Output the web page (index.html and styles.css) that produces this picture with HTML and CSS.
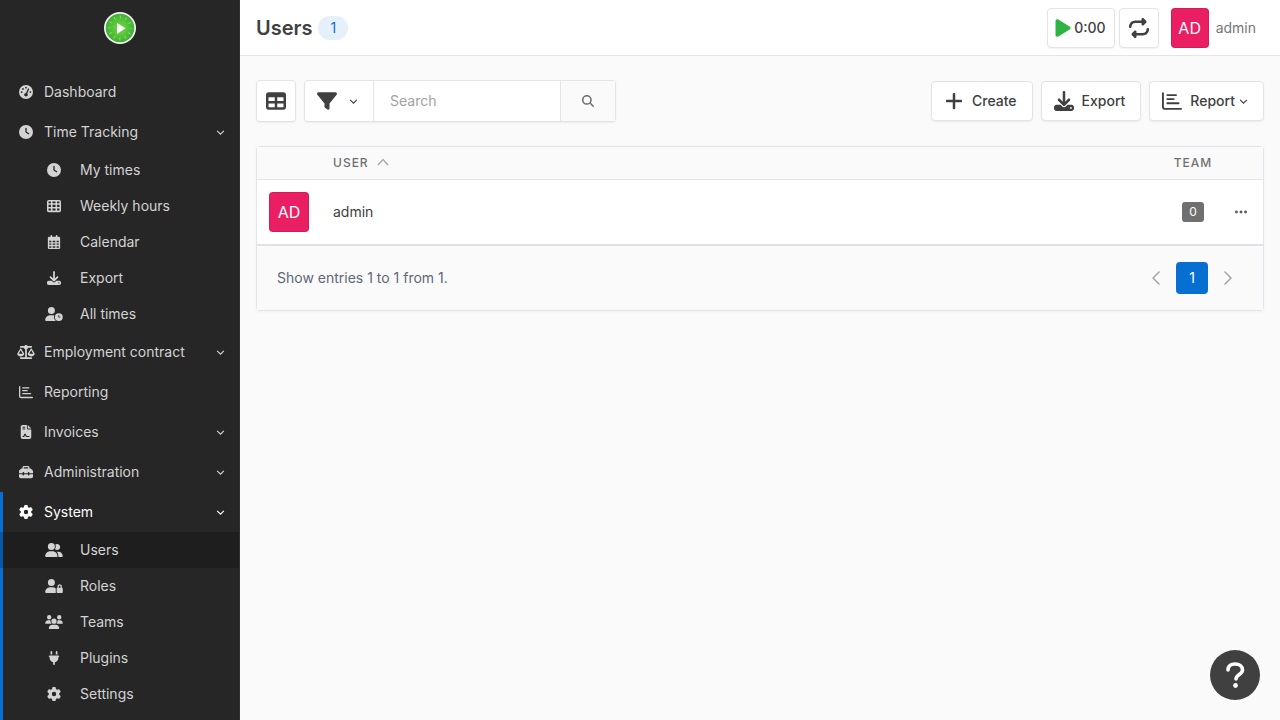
FILE: index.html
```html
<!DOCTYPE html>
<html lang="en">
<head>
  <meta charset="UTF-8" />
  <meta name="viewport" content="width=device-width, initial-scale=1.0"/>
  <title>Users</title>
  <link rel="stylesheet" href="styles.css">
</head>
<body>
  <!-- icon sprite -->
  <svg class="sprite" aria-hidden="true">
    <symbol id="i-gauge" viewBox="0 0 512 512"><path fill-rule="evenodd" d="M0 256a256 256 0 1 1 512 0A256 256 0 1 1 0 256zM288 96a32 32 0 1 0 -64 0 32 32 0 1 0 64 0zM256 416c35.3 0 64-28.7 64-64c0-17.4-6.9-33.1-18.1-44.6L366 161.7c5.3-12.1-.2-26.3-12.3-31.6s-26.3 .2-31.6 12.3L257.9 288c-.6 0-1.3 0-1.9 0c-35.3 0-64 28.7-64 64s28.7 64 64 64zM176 144a32 32 0 1 0 -64 0 32 32 0 1 0 64 0zM96 288a32 32 0 1 0 0-64 32 32 0 1 0 0 64zm352-32a32 32 0 1 0 -64 0 32 32 0 1 0 64 0z"/></symbol>
    <symbol id="i-clock" viewBox="0 0 512 512"><path d="M256 0a256 256 0 1 1 0 512A256 256 0 1 1 256 0zM232 120V256c0 8 4 15.5 10.7 20l96 64c11 7.4 25.9 4.4 33.3-6.7s4.4-25.9-6.7-33.3L280 243.2V120c0-13.3-10.7-24-24-24s-24 10.7-24 24z"/></symbol>
    <symbol id="i-cells" viewBox="0 0 512 512"><path fill-rule="evenodd" d="M64 32H448a64 64 0 0 1 64 64V416a64 64 0 0 1-64 64H64a64 64 0 0 1-64-64V96a64 64 0 0 1 64-64zM56 88v64h88V88zM200 88v64h112V88zM368 88v64h88V88zM56 208v80h88v-80zM200 208v80h112v-80zM368 208v80h88v-80zM56 344v80h88v-80zM200 344v80h112v-80zM368 344v80h88v-80z"/></symbol>
    <symbol id="i-calendar" viewBox="0 0 448 512"><path fill-rule="evenodd" d="M128 0c17.7 0 32 14.3 32 32V64H288V32c0-17.7 14.3-32 32-32s32 14.3 32 32V64h48c26.500 0 48 21.500 48 48v80H0V112C0 85.500 21.500 64 48 64H96V32c0-17.700 14.300-32 32-32zM0 192H448V464c0 26.500-21.500 48-48 48H48c-26.500 0-48-21.500-48-48zM48 208v56h80v-56zM176 208v56h96v-56zM320 208v56h80v-56zM48 312v48h80v-48zM176 312v48h96v-48zM320 312v48h80v-48zM48 408v56h80v-56zM176 408v56h96v-56zM320 408v56h80v-56z"/></symbol>
    <symbol id="i-download" viewBox="0 0 512 512"><path d="M288 32c0-17.700-14.300-32-32-32s-32 14.300-32 32V274.700l-73.400-73.400c-12.500-12.500-32.800-12.500-45.300 0s-12.500 32.800 0 45.300l128 128c12.500 12.500 32.800 12.500 45.300 0l128-128c12.500-12.500 12.500-32.800 0-45.300s-32.800-12.500-45.300 0L288 274.700V32zM64 352c-35.300 0-64 28.700-64 64v32c0 35.300 28.700 64 64 64H448c35.300 0 64-28.700 64-64V416c0-35.300-28.700-64-64-64H346.500l-45.300 45.300c-25 25-65.500 25-90.500 0L165.500 352H64zm368 56a24 24 0 1 1 0 48 24 24 0 1 1 0-48z"/></symbol>
    <symbol id="i-user-clock" viewBox="0 0 640 512"><path fill-rule="evenodd" d="M224 0a128 128 0 1 1 0 256A128 128 0 1 1 224 0zM178.300 304h91.400c20.600 0 40.400 3.500 58.800 9.900C323 331 320 349.100 320 368c0 59.500 29.500 112.100 74.800 144H29.700C13.300 512 0 498.700 0 482.300C0 383.800 79.800 304 178.300 304zM352 368a144 144 0 1 1 288 0 144 144 0 1 1 -288 0zm144-80c-8.800 0-16 7.200-16 16v64c0 8.800 7.200 16 16 16h48c8.800 0 16-7.200 16-16s-7.200-16-16-16H512V304c0-8.800-7.200-16-16-16z"/></symbol>
    <symbol id="i-scale" viewBox="0 0 640 512"><path d="M384 32H512c17.700 0 32 14.300 32 32s-14.300 32-32 32H398.400c-5.200 25.800-22.900 47.100-46.400 57.300V448H512c17.700 0 32 14.300 32 32s-14.300 32-32 32H320 128c-17.700 0-32-14.300-32-32s14.300-32 32-32H288V153.300c-23.500-10.300-41.200-31.600-46.400-57.300H128c-17.700 0-32-14.300-32-32s14.300-32 32-32H256c14.600-19.400 37.800-32 64-32s49.400 12.600 64 32zm55.600 288H584.400L512 195.800 439.600 320zM512 416c-62.900 0-115.200-34-126-78.900c-2.600-11 1-22.300 6.700-32.100l95.200-163.200c5-8.600 14.200-13.800 24.100-13.800s19.100 5.300 24.100 13.800l95.200 163.200c5.700 9.800 9.300 21.100 6.700 32.100C627.200 382 574.900 416 512 416zM126.800 195.800L54.400 320H199.300L126.800 195.800zM.9 337.100c-2.600-11 1-22.300 6.700-32.100l95.200-163.200c5-8.600 14.200-13.800 24.100-13.800s19.100 5.300 24.100 13.800l95.200 163.200c5.700 9.800 9.300 21.100 6.700 32.100C242 382 189.700 416 126.800 416S11.700 382 .9 337.100z"/></symbol>
    <symbol id="i-chart" viewBox="0 0 512 512"><path fill="none" stroke="currentColor" stroke-width="48" stroke-linecap="round" stroke-linejoin="round" d="M24 56V400a56 56 0 0 0 56 56H488M136 104H360M136 208H296M136 312H424"/></symbol>
    <symbol id="i-invoice" viewBox="0 0 384 512"><path fill-rule="evenodd" d="M64 0H224V128c0 17.700 14.300 32 32 32H384V448a64 64 0 0 1-64 64H64a64 64 0 0 1-64-64V64A64 64 0 0 1 64 0zM256 0L384 128H256zM64 64v36h96V64zM64 132v36h96v-36zM64 436H104c24 0 34-18 40-38l12-36 22 50c6 14 14 24 30 24H320v-36H218l-34-72c-14-26-44-24-54 2l-22 56c-3 10-6 14-12 14H64z"/></symbol>
    <symbol id="i-toolbox" viewBox="0 0 512 512"><path d="M176 88v40H336V88c0-4.400-3.600-8-8-8H184c-4.400 0-8 3.600-8 8zm-48 40V88c0-30.900 25.100-56 56-56H328c30.900 0 56 25.100 56 56v40h28.100c12.700 0 24.900 5.100 33.900 14.100l51.900 51.900c9 9 14.100 21.200 14.100 33.900V304H384V288c0-17.700-14.300-32-32-32s-32 14.300-32 32v16H192V288c0-17.700-14.300-32-32-32s-32 14.300-32 32v16H0V227.900c0-12.700 5.100-24.900 14.100-33.900l51.900-51.900c9-9 21.200-14.100 33.900-14.100H128zM0 416V336H128v16c0 17.700 14.300 32 32 32s32-14.300 32-32V336H320v16c0 17.700 14.300 32 32 32s32-14.300 32-32V336H512v80c0 35.300-28.700 64-64 64H64c-35.300 0-64-28.700-64-64z"/></symbol>
    <symbol id="i-gear" viewBox="0 0 512 512"><path d="M495.900 166.600c3.200 8.700 .5 18.400-6.400 24.600l-43.300 39.400c1.100 8.300 1.700 16.800 1.700 25.400s-.6 17.100-1.700 25.400l43.300 39.400c6.900 6.200 9.600 15.900 6.400 24.600c-4.400 11.900-9.700 23.300-15.800 34.300l-4.700 8.100c-6.600 11-14 21.400-22.100 31.200c-5.900 7.200-15.700 9.600-24.500 6.800l-55.700-17.700c-13.400 10.300-28.200 18.900-44 25.400l-12.500 57.100c-2 9.100-9 16.300-18.200 17.800c-13.800 2.300-28 3.500-42.500 3.500s-28.700-1.200-42.500-3.500c-9.200-1.500-16.200-8.700-18.200-17.800l-12.500-57.100c-15.800-6.500-30.600-15.100-44-25.400L83.100 425.900c-8.800 2.800-18.600 .3-24.500-6.800c-8.100-9.800-15.500-20.200-22.100-31.200l-4.700-8.100c-6.100-11-11.400-22.400-15.800-34.300c-3.200-8.700-.5-18.400 6.400-24.600l43.300-39.400C64.600 273.100 64 264.600 64 256s.6-17.100 1.700-25.400L22.400 191.200c-6.900-6.200-9.600-15.900-6.400-24.600c4.400-11.900 9.700-23.300 15.800-34.300l4.700-8.100c6.600-11 14-21.400 22.100-31.200c5.900-7.200 15.700-9.600 24.500-6.800l55.700 17.700c13.400-10.300 28.200-18.900 44-25.400l12.500-57.100c2-9.100 9-16.300 18.200-17.800C227.300 1.200 241.500 0 256 0s28.700 1.200 42.500 3.500c9.200 1.500 16.200 8.700 18.200 17.800l12.500 57.100c15.800 6.500 30.600 15.100 44 25.400l55.700-17.700c8.800-2.800 18.600-.3 24.500 6.800c8.100 9.800 15.500 20.200 22.100 31.200l4.700 8.100c6.100 11 11.400 22.400 15.800 34.300zM256 336a80 80 0 1 0 0-160 80 80 0 1 0 0 160z"/></symbol>
    <symbol id="i-user-group" viewBox="0 0 640 512"><path d="M96 128a128 128 0 1 1 256 0A128 128 0 1 1 96 128zM0 482.300C0 383.800 79.800 304 178.300 304h91.400C368.200 304 448 383.800 448 482.300c0 16.400-13.300 29.700-29.700 29.700H29.700C13.300 512 0 498.700 0 482.300zM609.300 512H471.400c5.400-9.400 8.600-20.300 8.600-32v-8c0-60.700-27.100-115.200-69.800-151.800c2.400-.1 4.700-.2 7.100-.2h61.400C567.800 320 640 392.200 640 481.300c0 17-13.800 30.700-30.700 30.700zM432 256c-31 0-59-12.600-79.300-32.900C372.400 196.500 384 163.600 384 128c0-26.800-6.600-52.100-18.300-74.300C384.300 40.100 407.200 32 432 32c61.900 0 112 50.100 112 112s-50.100 112-112 112z"/></symbol>
    <symbol id="i-user-lock" viewBox="0 0 640 512"><path fill-rule="evenodd" d="M224 256A128 128 0 1 0 224 0a128 128 0 1 0 0 256zm-45.700 48C79.800 304 0 383.800 0 482.300C0 498.700 13.300 512 29.700 512H392.600c-5.400-9.400-8.600-20.300-8.600-32V352c0-2.100 .1-4.200 .3-6.300c-31-26-71-41.700-114.600-41.700H178.300zM528 240c17.700 0 32 14.300 32 32v48H496V272c0-17.700 14.300-32 32-32zm-80 32v48c-17.700 0-32 14.300-32 32V480c0 17.700 14.300 32 32 32H608c17.700 0 32-14.300 32-32V352c0-17.700-14.300-32-32-32V272c0-44.200-35.800-80-80-80s-80 35.800-80 80z"/></symbol>
    <symbol id="i-users" viewBox="0 0 640 512"><path d="M144 0a80 80 0 1 1 0 160A80 80 0 1 1 144 0zM512 0a80 80 0 1 1 0 160A80 80 0 1 1 512 0zM0 298.700C0 239.800 47.800 192 106.700 192h42.700c15.900 0 31 3.500 44.600 9.700c-1.300 7.200-1.900 14.700-1.900 22.300c0 38.200 16.800 72.500 43.300 96c-.2 0-.4 0-.7 0H21.300C9.600 320 0 310.400 0 298.700zM405.300 320c-.2 0-.4 0-.7 0c26.600-23.500 43.300-57.800 43.300-96c0-7.600-.7-15-1.900-22.300c13.600-6.300 28.700-9.700 44.600-9.700h42.700C592.200 192 640 239.800 640 298.700c0 11.800-9.600 21.300-21.300 21.300H405.300zM224 224a96 96 0 1 1 192 0 96 96 0 1 1 -192 0zM128 485.300C128 411.700 187.700 352 261.300 352H378.700C452.300 352 512 411.700 512 485.300c0 14.700-11.900 26.700-26.700 26.700H154.700c-14.700 0-26.700-11.900-26.700-26.700z"/></symbol>
    <symbol id="i-plug" viewBox="0 0 384 512"><path d="M96 0C78.300 0 64 14.300 64 32v96h64V32c0-17.700-14.300-32-32-32zM288 0c-17.700 0-32 14.300-32 32v96h64V32c0-17.700-14.300-32-32-32zM32 160c-17.700 0-32 14.300-32 32s14.300 32 32 32v32c0 77.400 55 142 128 156.800V480c0 17.700 14.300 32 32 32s32-14.300 32-32V412.800C297 398 352 333.400 352 256V224c17.700 0 32-14.300 32-32s-14.300-32-32-32H32z"/></symbol>
    <symbol id="i-play" viewBox="0 0 384 512"><path d="M73 39c-14.800-9.100-33.400-9.400-48.500-.9S0 62.600 0 80V432c0 17.400 9.400 33.400 24.500 41.900s33.700 8.100 48.500-.9L361 297c14.300-8.700 23-24.200 23-41s-8.700-32.200-23-41L73 39z"/></symbol>
    <symbol id="i-repeat" viewBox="0 0 512 512"><path d="M0 224c0 17.700 14.300 32 32 32s32-14.300 32-32c0-53 43-96 96-96H320v32c0 12.900 7.800 24.600 19.800 29.600s25.700 2.200 34.900-6.900l64-64c12.500-12.500 12.500-32.800 0-45.300l-64-64c-9.200-9.200-22.900-11.900-34.900-6.900S320 19.100 320 32V64H160C71.600 64 0 135.600 0 224zm512 64c0-17.700-14.300-32-32-32s-32 14.300-32 32c0 53-43 96-96 96H192V352c0-12.900-7.800-24.600-19.800-29.600s-25.700-2.200-34.900 6.900l-64 64c-12.500 12.500-12.500 32.800 0 45.300l64 64c9.200 9.200 22.900 11.900 34.900 6.900s19.800-16.600 19.800-29.600V448H352c88.400 0 160-71.600 160-160z"/></symbol>
    <symbol id="i-table" viewBox="0 0 512 512"><path fill-rule="evenodd" d="M64 256V160H224v96H64zm0 64H224v96H64V320zm224 96V320H448v96H288zM448 256H288V160H448v96zM64 32C28.700 32 0 60.700 0 96V416c0 35.300 28.700 64 64 64H448c35.300 0 64-28.700 64-64V96c0-35.300-28.700-64-64-64H64z"/></symbol>
    <symbol id="i-filter" viewBox="0 0 512 512"><path d="M3.900 54.900C10.500 40.900 24.500 32 40 32H472c15.500 0 29.500 8.900 36.100 22.900s4.600 30.500-5.200 42.500L320 320.900V448c0 12.100-6.800 23.200-17.700 28.600s-23.800 4.300-33.500-3l-64-48c-8.100-6-12.800-15.500-12.800-25.600V320.900L9 97.300C-.7 85.400-2.800 68.800 3.900 54.900z"/></symbol>
    <symbol id="i-search" viewBox="0 0 512 512"><path d="M416 208c0 45.900-14.900 88.300-40 122.700L502.600 457.400c12.500 12.500 12.500 32.800 0 45.300s-32.800 12.500-45.300 0L330.700 376c-34.400 25.200-76.800 40-122.700 40C93.100 416 0 322.900 0 208S93.100 0 208 0S416 93.100 416 208zM208 352a144 144 0 1 0 0-288 144 144 0 1 0 0 288z"/></symbol>
    <symbol id="i-plus" viewBox="0 0 448 512"><path d="M256 80c0-17.700-14.300-32-32-32s-32 14.300-32 32V224H48c-17.700 0-32 14.300-32 32s14.300 32 32 32H192V432c0 17.700 14.300 32 32 32s32-14.300 32-32V288H400c17.700 0 32-14.300 32-32s-14.300-32-32-32H256V80z"/></symbol>
    <symbol id="i-dots" viewBox="0 0 14 14"><circle cx="3" cy="7" r="1.300"/><circle cx="7" cy="7" r="1.300"/><circle cx="11" cy="7" r="1.300"/></symbol>
    <symbol id="i-down" viewBox="0 0 8 8"><path fill="none" stroke="currentColor" d="M1 2.500L4 5.500L7 2.500"/></symbol>
    <symbol id="i-up" viewBox="0 0 12 8"><path fill="none" stroke="currentColor" stroke-width="1.500" d="M1 7L6 1.500L11 7"/></symbol>
    <symbol id="i-left" viewBox="0 0 16 16"><path fill="none" stroke="currentColor" stroke-width="1.500" stroke-linecap="round" stroke-linejoin="round" d="M11 2L5 8L11 14"/></symbol>
    <symbol id="i-right" viewBox="0 0 16 16"><path fill="none" stroke="currentColor" stroke-width="1.500" stroke-linecap="round" stroke-linejoin="round" d="M5 2L11 8L5 14"/></symbol>
  </svg>

  <aside class="sidebar">
    <a class="brand" href="#" aria-label="Home">
      <svg width="32" height="32" viewBox="0 0 32 32">
        <defs>
          <radialGradient id="face"><stop offset="0" stop-color="#6fdc45"/><stop offset="1" stop-color="#40b030"/></radialGradient>
        </defs>
        <circle cx="16" cy="16" r="16" fill="#f3f3f3"/>
        <circle cx="16" cy="16" r="14.300" fill="url(#face)"/>
        <circle cx="16" cy="16" r="10.800" fill="none" stroke="#8ad677" stroke-width="3" stroke-dasharray="1 4.655" stroke-dashoffset=".5"/>
        <path fill="#fff" d="M13 11L21.500 16.300L13 22z"/>
      </svg>
    </a>

    <ul class="menu">
      <li><a href="#"><svg class="icon"><use href="#i-gauge"/></svg>Dashboard</a></li>
      <li>
        <a href="#"><svg class="icon"><use href="#i-clock"/></svg>Time Tracking<svg class="caret"><use href="#i-down"/></svg></a>
        <ul class="submenu">
          <li><a href="#"><svg class="icon"><use href="#i-clock"/></svg>My times</a></li>
          <li><a href="#"><svg class="icon"><use href="#i-cells"/></svg>Weekly hours</a></li>
          <li><a href="#"><svg class="icon"><use href="#i-calendar"/></svg>Calendar</a></li>
          <li><a href="#"><svg class="icon"><use href="#i-download"/></svg>Export</a></li>
          <li><a href="#"><svg class="icon"><use href="#i-user-clock"/></svg>All times</a></li>
        </ul>
      </li>
      <li><a href="#"><svg class="icon"><use href="#i-scale"/></svg>Employment contract<svg class="caret"><use href="#i-down"/></svg></a></li>
      <li><a href="#"><svg class="icon"><use href="#i-chart"/></svg>Reporting</a></li>
      <li><a href="#"><svg class="icon"><use href="#i-invoice"/></svg>Invoices<svg class="caret"><use href="#i-down"/></svg></a></li>
      <li><a href="#"><svg class="icon"><use href="#i-toolbox"/></svg>Administration<svg class="caret"><use href="#i-down"/></svg></a></li>
      <li class="open">
        <a href="#"><svg class="icon"><use href="#i-gear"/></svg>System<svg class="caret"><use href="#i-down"/></svg></a>
        <ul class="submenu">
          <li><a class="active" href="#"><svg class="icon"><use href="#i-user-group"/></svg>Users</a></li>
          <li><a href="#"><svg class="icon"><use href="#i-user-lock"/></svg>Roles</a></li>
          <li><a href="#"><svg class="icon"><use href="#i-users"/></svg>Teams</a></li>
          <li><a href="#"><svg class="icon"><use href="#i-plug"/></svg>Plugins</a></li>
          <li><a href="#"><svg class="icon"><use href="#i-gear"/></svg>Settings</a></li>
        </ul>
      </li>
    </ul>
  </aside>

  <div class="page">
    <header class="topbar">
      <h1>Users</h1>
      <span class="count">1</span>
      <div class="topbar-actions">
        <button class="btn timer" type="button"><svg class="icon-lg play"><use href="#i-play"/></svg>0:00</button>
        <button class="btn square" type="button" aria-label="Restart"><svg class="icon-lg"><use href="#i-repeat"/></svg></button>
        <a class="account" href="#"><span class="avatar">AD</span>admin</a>
      </div>
    </header>

    <main class="content">
      <div class="toolbar">
        <button class="btn square tall" type="button" aria-label="Columns"><svg class="icon-lg"><use href="#i-table"/></svg></button>
        <form class="search">
          <button class="filter" type="button" aria-label="Filter"><svg class="icon-lg"><use href="#i-filter"/></svg><svg class="caret"><use href="#i-down"/></svg></button>
          <input type="text" placeholder="Search" aria-label="Search" />
          <button class="submit" type="submit" aria-label="Search"><svg class="icon-sm"><use href="#i-search"/></svg></button>
        </form>
        <div class="actions">
          <button class="btn" type="button"><svg class="icon-lg"><use href="#i-plus"/></svg>Create</button>
          <button class="btn" type="button"><svg class="icon-lg"><use href="#i-download"/></svg>Export</button>
          <button class="btn" type="button"><svg class="icon-lg"><use href="#i-chart"/></svg>Report<svg class="caret"><use href="#i-down"/></svg></button>
        </div>
      </div>

      <section class="card">
        <table>
          <thead>
            <tr>
              <th class="col-avatar"></th>
              <th>User<svg class="sort"><use href="#i-up"/></svg></th>
              <th class="col-team">Team</th>
              <th class="col-menu"></th>
            </tr>
          </thead>
          <tbody>
            <tr>
              <td class="col-avatar"><span class="avatar">AD</span></td>
              <td>admin</td>
              <td class="col-team"><span class="badge">0</span></td>
              <td class="col-menu"><button class="more" type="button" aria-label="Actions"><svg class="dots"><use href="#i-dots"/></svg></button></td>
            </tr>
          </tbody>
        </table>
        <div class="card-footer">
          <p>Show entries 1 to 1 from 1.</p>
          <nav class="pagination">
            <a href="#" aria-label="Previous"><svg><use href="#i-left"/></svg></a>
            <a class="current" href="#">1</a>
            <a href="#" aria-label="Next"><svg><use href="#i-right"/></svg></a>
          </nav>
        </div>
      </section>
    </main>
  </div>

  <button class="help" type="button" aria-label="Help">
    <svg width="24" height="32" viewBox="0 0 24 32"><path fill="none" stroke="#fff" stroke-width="3.600" stroke-linecap="round" stroke-linejoin="round" d="M5 11C5 7 8 5 12 5C16.500 5 19.500 7.500 19.500 11C19.500 15.500 13 15.500 13 20"/><circle cx="12.500" cy="26.500" r="2.400" fill="#fff"/></svg>
  </button>
</body>
</html>
```
FILE: styles.css
```css
* { box-sizing: border-box; }
body { margin: 0; display: flex; min-height: 100vh; font-family: Inter, "Liberation Sans", sans-serif; font-size: 14px; line-height: 20px; color: #404040; background: #fafafa; }
ul { list-style: none; margin: 0; padding: 0; }
a { color: inherit; text-decoration: none; }
button { font: inherit; color: inherit; cursor: pointer; }
svg { fill: currentColor; flex: none; }
.sprite { display: none; }

.icon { width: 18px; height: 14px; }
.icon-sm { width: 12px; height: 12px; }
.icon-lg { width: 20px; height: 20px; }
.caret { width: 9px; height: 9px; }

/* sidebar */
.sidebar { position: sticky; top: 0; flex: none; width: 240px; height: 100vh; overflow: hidden; background: #262626; color: #d3d3d3; border-right: 1px solid #303030; }
.brand { display: flex; align-items: center; justify-content: center; height: 56px; }
.menu { padding-top: 16px; }
.menu a { display: flex; align-items: center; gap: 9px; height: 40px; padding: 0 14px 0 17px; }
.menu .caret { margin-left: auto; }
.menu .submenu a { height: 36px; gap: 17px; padding-left: 45px; }
.menu .open { height: 100vh; box-shadow: inset 3px 0 #066fd1; }
.open > a { color: #fff; }
.submenu .active { background: rgba(0, 0, 0, .2); }

/* header */
.page { flex: 1; min-width: 0; }
.topbar { display: flex; align-items: center; height: 56px; padding: 0 24px 0 16px; background: #fff; border-bottom: 1px solid #e4e5e8; }
h1 { margin: 0 6px 0 0; font-size: 20px; line-height: 28px; font-weight: 600; }
.count { padding: 2px 12px; border-radius: 12px; background: #e6f0fa; color: #066fd1; }
.topbar-actions { display: flex; gap: 4px; margin-left: auto; }
.account { display: flex; align-items: center; gap: 7px; margin-left: 8px; color: #777; }

.btn { display: flex; align-items: center; justify-content: center; gap: 8px; height: 40px; padding: 0 15px 0 12px; border: 1px solid #e4e4e7; border-radius: 4px; background: #fff; font-weight: 500; box-shadow: 0 1px 2px rgba(0, 0, 0, .06); }
.btn .caret { margin-left: -4px; }
.btn.timer { gap: 3px; padding: 0 8px 0 7px; }
.btn.square { width: 40px; padding: 0; }
.btn.tall { height: 42px; }
.play { width: 16px; color: #2fb344; }

.avatar { display: inline-flex; align-items: center; justify-content: center; width: 40px; height: 40px; border-radius: 4px; background: #e91e63; color: #fff; font-size: 16px; box-shadow: inset 0 0 0 1px rgba(0, 0, 0, .08); }
.account .avatar { width: 38px; }

/* toolbar */
.content { padding: 24px 16px; }
.toolbar { display: flex; align-items: center; gap: 8px; margin-bottom: 24px; }
.search { display: flex; width: 312px; height: 42px; border: 1px solid #e4e4e7; border-radius: 4px; background: #fff; box-shadow: 0 1px 2px rgba(0, 0, 0, .06); }
.search input { flex: 1; min-width: 0; padding: 0 16px; border: 0; background: none; font: inherit; color: inherit; outline: none; }
.search input::placeholder { color: #a3a3a3; }
.filter, .submit { display: flex; align-items: center; justify-content: center; border: 0; background: none; }
.filter { gap: 12px; padding: 0 15px 0 12px; border-right: 1px solid #e4e4e7; }
.submit { width: 55px; border-left: 1px solid #e4e4e7; background: #fafafa; color: #6b6b6b; }
.actions { display: flex; gap: 8px; margin-left: auto; }

/* table card */
.card { border: 1px solid #e4e5ea; border-radius: 4px; background: #fff; box-shadow: 0 1px 3px rgba(0, 0, 0, .04); }
table { width: 100%; border-collapse: collapse; }
th, td { padding: 0 12px; text-align: left; }
th { height: 32px; background: #fafafa; border-bottom: 1px solid #e2e4e8; color: #707070; font-size: 12px; line-height: 16px; font-weight: 500; letter-spacing: 1px; text-transform: uppercase; }
td { height: 66px; border-bottom: 2px solid #dfe3e8; }
td .avatar { display: flex; }
.col-avatar { width: 64px; }
.col-team { width: 64px; text-align: center; }
.col-menu { width: 38px; padding: 0 8px; }
.sort { width: 12px; height: 8px; margin: 0 0 1px 8px; color: #aaa; }
.badge { display: inline-block; padding: 0 7px; border-radius: 3px; background: #707070; color: #fff; font-size: 12px; }
.more { display: block; padding: 0; border: 0; background: none; color: #606060; }
.dots { display: block; width: 16px; height: 16px; }
.card-footer { display: flex; align-items: center; justify-content: space-between; height: 64px; padding: 0 19px 0 20px; background: #fafafa; color: #5f6876; }
.card-footer p { margin: 0; }
.pagination { display: flex; gap: 4px; }
.pagination a { display: flex; align-items: center; justify-content: center; width: 32px; height: 32px; border-radius: 4px; color: #a3a3a3; }
.pagination svg { width: 16px; height: 16px; }
.pagination .current { background: #066fd1; color: #fff; }

.help { position: fixed; right: 20px; bottom: 20px; display: flex; align-items: center; justify-content: center; width: 50px; height: 50px; padding: 0; border: 0; border-radius: 50%; background: #404040; }
```
